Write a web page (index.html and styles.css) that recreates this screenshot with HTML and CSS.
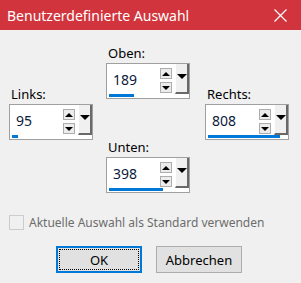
FILE: index.html
```html
<!DOCTYPE html>
<html lang="de">

<head>
  <meta charset="UTF-8">
  <title>Benutzerdefinierte Auswahl</title>
  <link rel="stylesheet" href="styles.css">
</head>

<body>
  <div class="dialog">
    <div class="titlebar">
      <span class="title">Benutzerdefinierte Auswahl</span>
      <svg class="close" width="13" height="13" viewBox="0 0 13 13">
        <path d="M0.5 0.5 L12.5 12.5 M12.5 0.5 L0.5 12.5" stroke="#fff" stroke-width="1.2" fill="none" />
      </svg>
    </div>

    <div class="content">
      <div class="fields">
        <!-- linke Spalte -->
        <div class="col col-side">
          <div class="field">
            <div class="label">Links:</div>
            <div class="spin">
              <div class="spin-row">
                <span class="value">95</span>
                <div class="arrows">
                  <span class="arr up"></span>
                  <span class="arr down"></span>
                </div>
                <span class="drop"></span>
              </div>
              <div class="track"><div class="bar" style="width: 6px"></div></div>
            </div>
          </div>
        </div>

        <!-- mittlere Spalte -->
        <div class="col col-mid">
          <div class="field">
            <div class="label">Oben:</div>
            <div class="spin">
              <div class="spin-row">
                <span class="value">189</span>
                <div class="arrows">
                  <span class="arr up"></span>
                  <span class="arr down"></span>
                </div>
                <span class="drop"></span>
              </div>
              <div class="track"><div class="bar" style="width: 25px"></div></div>
            </div>
          </div>
          <div class="field field-bottom">
            <div class="label">Unten:</div>
            <div class="spin">
              <div class="spin-row">
                <span class="value">398</span>
                <div class="arrows">
                  <span class="arr up"></span>
                  <span class="arr down"></span>
                </div>
                <span class="drop"></span>
              </div>
              <div class="track"><div class="bar" style="width: 54px"></div></div>
            </div>
          </div>
        </div>

        <!-- rechte Spalte -->
        <div class="col col-side">
          <div class="field">
            <div class="label">Rechts:</div>
            <div class="spin">
              <div class="spin-row">
                <span class="value">808</span>
                <div class="arrows">
                  <span class="arr up"></span>
                  <span class="arr down"></span>
                </div>
                <span class="drop"></span>
              </div>
              <div class="track"><div class="bar" style="width: 72px"></div></div>
            </div>
          </div>
        </div>
      </div>

      <label class="check">
        <span class="box"></span>
        <span>Aktuelle Auswahl als Standard verwenden</span>
      </label>

      <div class="buttons">
        <button class="btn btn-default"><span class="focus">OK</span></button>
        <button class="btn">Abbrechen</button>
      </div>
    </div>
  </div>
</body>

</html>
```

FILE: styles.css
```css
html, body {
  margin: 0;
  padding: 0;
  background: #f0f0f0;
}
.dialog {
  width: 301px;
  height: 283px;
  font-family: "Noto Sans", "Open Sans", sans-serif;
  font-size: 12px;
  color: #000;
}
.titlebar {
  height: 30px;
  background: #d1343c;
  display: flex;
  align-items: center;
  justify-content: space-between;
  padding: 0 14px 0 7px;
}
.title {
  color: #fff;
  font-size: 14px;
}
.fields {
  display: flex;
  height: 168px;
}
.col {
  display: flex;
  flex-direction: column;
}
.col-side {
  padding-top: 56px;
}
.col-side:first-child {
  padding-left: 9px;
  width: 97px;
}
.col-mid {
  padding-top: 15px;
  width: 99px;
}
.field-bottom {
  margin-top: 40px;
}
.label {
  height: 16px;
  line-height: 16px;
  margin-bottom: 2px;
  padding-left: 2px;
  font-size: 13px;
}
.spin {
  width: 82px;
  height: 34px;
  border: 1px solid #a0a0a0;
  background: #fff;
  display: flex;
  flex-direction: column;
}
.spin-row {
  display: flex;
  height: 30px;
}
.value {
  flex: 1;
  padding-left: 6px;
  line-height: 32px;
  font-size: 14px;
  color: #0a1a3a;
}
.arrows {
  display: flex;
  flex-direction: column;
  gap: 3px;
  padding-top: 4px;
  margin-right: 3px;
}
.arr {
  width: 10px;
  height: 9px;
  border: 1px solid #adadad;
  background: #ececec;
  display: flex;
  align-items: center;
  justify-content: center;
}
.arr::after {
  content: "";
  border-left: 4px solid transparent;
  border-right: 4px solid transparent;
}
.up::after {
  border-bottom: 4px solid #000;
}
.down::after {
  border-top: 4px solid #000;
}
.drop {
  width: 14px;
  box-sizing: border-box;
  background: #f0f0f0;
  border-left: 1px solid #fff;
  border-right: 2px solid #696969;
  border-bottom: 2px solid #696969;
  display: flex;
  align-items: center;
  justify-content: center;
}
.drop::after {
  content: "";
  border-left: 5px solid transparent;
  border-right: 5px solid transparent;
  border-top: 5px solid #000;
  margin-bottom: 4px;
}
.track {
  height: 3px;
  padding-left: 2px;
}
.bar {
  height: 3px;
  background: #0078d7;
}
.check {
  display: flex;
  align-items: center;
  gap: 5px;
  margin: 16px 0 0 9px;
  color: #6d6d6d;
  font-size: 12px;
}
.box {
  width: 13px;
  height: 13px;
  border: 1px solid #cccccc;
  background: #f0f0f0;
}
.buttons {
  display: flex;
  gap: 14px;
  margin: 15px 0 0 56px;
}
.btn {
  width: 86px;
  height: 27px;
  margin: 0;
  padding: 0;
  font-family: "Noto Sans", "Open Sans", sans-serif;
  font-size: 13px;
  color: #000;
  background: #e1e1e1;
  border: 1px solid #adadad;
}
.btn-default {
  border: 2px solid #0078d7;
  padding: 1px;
}
.focus {
  display: flex;
  align-items: center;
  justify-content: center;
  height: 100%;
  border: 1px dotted #000;
  box-sizing: border-box;
}
```
